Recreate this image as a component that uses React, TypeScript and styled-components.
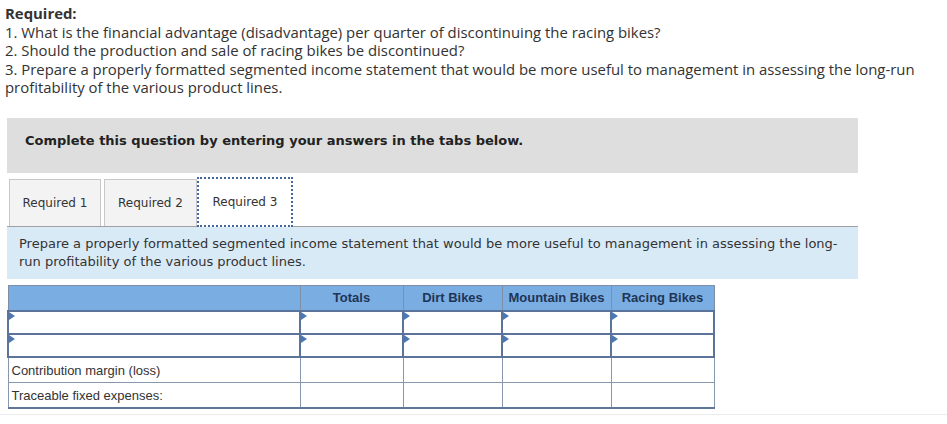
import React from "react";
import styled, { createGlobalStyle } from "styled-components";

const Global = createGlobalStyle`
  html, body { margin: 0; padding: 0; background: #fff; }
  body { font-family: "Open Sans", "Liberation Sans", sans-serif; color: #333; }
`;

const Page = styled.div`
  width: 947px;
  height: 424px;
  overflow: hidden;
  position: relative;
`;

const Intro = styled.div`
  padding: 4px 0 0 5px;
  width: 932px;
  font-family: "Open Sans", "Liberation Sans", sans-serif;
  font-size: 14.9px;
  line-height: 18.5px;
  color: #333;
`;

const IntroTitle = styled.div`
  font-weight: 700;
`;

const Panel = styled.div`
  margin: 21px 0 0 7px;
  width: 851px;
`;

const Banner = styled.div`
  height: 55px;
  box-sizing: border-box;
  background: #dedede;
  padding: 15px 0 0 18px;
  font-family: "DejaVu Sans", Verdana, sans-serif;
  font-weight: 700;
  font-size: 13px;
  color: #222;
`;

const Tabs = styled.div`
  display: flex;
  align-items: flex-end;
  margin-top: 6px;
  padding-left: 2px;
  border-bottom: 1px solid #a0a0a0;
  height: 48px;
  box-sizing: border-box;
`;

const Tab = styled.div<{ $active?: boolean; $width: number; $gap: number }>`
  width: ${(p) => p.$width}px;
  margin-right: ${(p) => p.$gap}px;
  height: ${(p) => (p.$active ? 50 : 47)}px;
  box-sizing: border-box;
  display: flex;
  align-items: center;
  justify-content: center;
  font-family: "DejaVu Sans", Verdana, sans-serif;
  font-size: 12px;
  color: #333;
  background: ${(p) => (p.$active ? "#fff" : "#f3f3f3")};
  border: ${(p) => (p.$active ? "2px dotted #46679a" : "1px solid #c8c8c8")};
  border-bottom: ${(p) => (p.$active ? "2px dotted #46679a" : "none")};
  margin-bottom: ${(p) => (p.$active ? "-1px" : "0")};
  padding-top: ${(p) => (p.$active ? "1px" : "0")};
`;

const Instruction = styled.div`
  background: #d9eaf7;
  padding: 8px 12px 8px 12px;
  height: 52px;
  box-sizing: border-box;
  font-family: "DejaVu Sans", Verdana, sans-serif;
  font-size: 13px;
  line-height: 18px;
  color: #333;
`;

const Table = styled.table`
  margin: 6px 0 0 7px;
  border-collapse: collapse;
  font-family: "Liberation Sans", Arial, sans-serif;
  border-bottom: 2px solid #5f7699;
`;

const HeadCell = styled.th<{ $w: number }>`
  width: ${(p) => p.$w}px;
  height: 26px;
  padding: 4px 4px 0;
  box-sizing: border-box;
  background: #7aade2;
  border: 1px solid #7d8ea6;
  border-bottom: 2px solid #5a7398;
  font-size: 13px;
  font-weight: 700;
  color: #1e3556;
  text-align: center;
  vertical-align: top;
`;

const InputCell = styled.td`
  height: 21px;
  padding: 0;
  border: 2px solid #5c7499;
  position: relative;
  background: #fff;
`;

const Marker = styled.span`
  position: absolute;
  left: 0;
  top: 0;
  width: 0;
  height: 0;
  border-top: 4px solid transparent;
  border-bottom: 4px solid transparent;
  border-left: 6px solid #4a78b5;
`;

const LabelCell = styled.td`
  height: 24px;
  padding: 0 0 0 3px;
  border: 1px solid #8797ad;
  font-size: 13px;
  color: #333;
  vertical-align: middle;
`;

const ValueCell = styled.td`
  height: 24px;
  padding: 0;
  border: 1px solid #8797ad;
  border-top: 1px solid #111;
`;

const Foot = styled.div`
  position: absolute;
  left: 0;
  right: 0;
  top: 414px;
  border-top: 1px solid #ececec;
`;

const widths = [292, 103, 99, 109, 103];
const heads = ["", "Totals", "Dirt Bikes", "Mountain Bikes", "Racing Bikes"];

export default function App() {
  return (
    <Page>
      <Global />
      <Intro>
        <IntroTitle>Required:</IntroTitle>
        <div>1. What is the financial advantage (disadvantage) per quarter of discontinuing the racing bikes?</div>
        <div>2. Should the production and sale of racing bikes be discontinued?</div>
        <div>
          3. Prepare a properly formatted segmented income statement that would be more useful to management in assessing the long-run
          profitability of the various product lines.
        </div>
      </Intro>
      <Panel>
        <Banner>Complete this question by entering your answers in the tabs below.</Banner>
        <Tabs>
          <Tab $width={92} $gap={3}>Required 1</Tab>
          <Tab $width={93} $gap={0}>Required 2</Tab>
          <Tab $width={96} $gap={0} $active>Required 3</Tab>
        </Tabs>
        <Instruction>
          Prepare a properly formatted segmented income statement that would be more useful to management in assessing the long-run
          profitability of the various product lines.
        </Instruction>
      </Panel>
      <Table>
        <thead>
          <tr>
            {heads.map((h, i) => (
              <HeadCell key={i} $w={widths[i]}>{h}</HeadCell>
            ))}
          </tr>
        </thead>
        <tbody>
          {[0, 1].map((r) => (
            <tr key={r}>
              {widths.map((_, i) => (
                <InputCell key={i}>
                  <Marker />
                </InputCell>
              ))}
            </tr>
          ))}
          {["Contribution margin (loss)", "Traceable fixed expenses:"].map((label) => (
            <tr key={label}>
              <LabelCell>{label}</LabelCell>
              {widths.slice(1).map((_, i) => (
                <ValueCell key={i} />
              ))}
            </tr>
          ))}
        </tbody>
      </Table>
      <Foot />
    </Page>
  );
}
